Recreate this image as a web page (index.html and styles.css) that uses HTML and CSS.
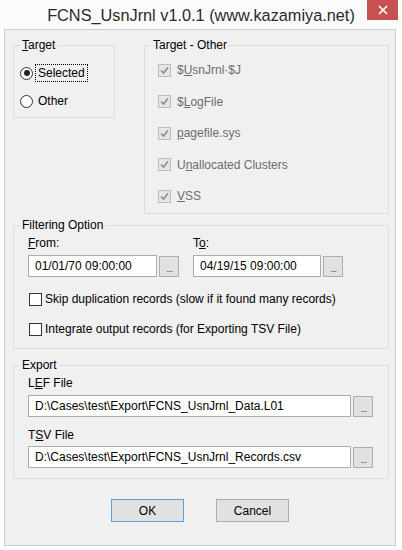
FILE: index.html
```html
<!DOCTYPE html>
<html>
<head>
<meta charset="utf-8">
<link rel="stylesheet" href="styles.css">
</head>
<body>
<div class="titlebar">
  <div></div>
  <div class="title">FCNS_UsnJrnl v1.0.1 (www.kazamiya.net)</div>
  <div class="close"><svg width="10" height="10" viewBox="0 0 10 10"><path d="M1 1 L9 9 M9 1 L1 9" stroke="#fff" stroke-width="1.7" fill="none"/></svg></div>
</div>
<div class="window">
  <div class="toprow">
    <div class="group g-target">
      <div class="legend"><u>T</u>arget</div>
      <div class="radio-row first"><span class="radio checked"></span><span class="rlabel focus">Selected</span></div>
      <div class="radio-row second"><span class="radio"></span><span class="rlabel">Other</span></div>
    </div>
    <div class="group g-other">
      <div class="legend">Target - Other</div>
      <div class="check-row disabled first"><span class="cbox"><svg width="11" height="11" viewBox="0 0 11 11"><path d="M2 5.5 L4.5 8 L9 2.5" stroke="#8a8a8a" stroke-width="1.6" fill="none"/></svg></span><span>$<u>U</u>snJrnl·$J</span></div>
      <div class="check-row disabled"><span class="cbox"><svg width="11" height="11" viewBox="0 0 11 11"><path d="M2 5.5 L4.5 8 L9 2.5" stroke="#8a8a8a" stroke-width="1.6" fill="none"/></svg></span><span>$<u>L</u>ogFile</span></div>
      <div class="check-row disabled"><span class="cbox"><svg width="11" height="11" viewBox="0 0 11 11"><path d="M2 5.5 L4.5 8 L9 2.5" stroke="#8a8a8a" stroke-width="1.6" fill="none"/></svg></span><span><u>p</u>agefile.sys</span></div>
      <div class="check-row disabled"><span class="cbox"><svg width="11" height="11" viewBox="0 0 11 11"><path d="M2 5.5 L4.5 8 L9 2.5" stroke="#8a8a8a" stroke-width="1.6" fill="none"/></svg></span><span>U<u>n</u>allocated Clusters</span></div>
      <div class="check-row disabled"><span class="cbox"><svg width="11" height="11" viewBox="0 0 11 11"><path d="M2 5.5 L4.5 8 L9 2.5" stroke="#8a8a8a" stroke-width="1.6" fill="none"/></svg></span><span><u>V</u>SS</span></div>
    </div>
  </div>

  <div class="group g-filter">
    <div class="legend">Filtering Option</div>
    <div class="date-row">
      <div class="date-col">
        <div class="flabel"><u>F</u>rom:</div>
        <div class="field"><div class="textbox tb-date">01/01/70 09:00:00</div><div class="browse">...</div></div>
      </div>
      <div class="date-col">
        <div class="flabel">T<u>o</u>:</div>
        <div class="field"><div class="textbox tb-date2">04/19/15 09:00:00</div><div class="browse">...</div></div>
      </div>
    </div>
    <div class="check-row opt first-opt"><span class="cbox enabled"></span><span>Skip duplication records (slow if it found many records)</span></div>
    <div class="check-row opt"><span class="cbox enabled"></span><span>Integrate output records (for Exporting TSV File)</span></div>
  </div>

  <div class="group g-export">
    <div class="legend">Export</div>
    <div class="flabel lef">L<u>E</u>F File</div>
    <div class="field"><div class="textbox tb-path">D:\Cases\test\Export\FCNS_UsnJrnl_Data.L01</div><div class="browse">...</div></div>
    <div class="flabel tsv">T<u>S</u>V File</div>
    <div class="field f2"><div class="textbox tb-path">D:\Cases\test\Export\FCNS_UsnJrnl_Records.csv</div><div class="browse">...</div></div>
  </div>

  <div class="buttons">
    <div class="btn default">OK</div>
    <div class="btn">Cancel</div>
  </div>
</div>
</body>
</html>
```

FILE: styles.css
```css
html, body {
  margin: 0;
  padding: 0;
}
body {
  width: 402px;
  height: 550px;
  background: #ffffff;
  font-family: "Liberation Sans", Arial, sans-serif;
  font-size: 12px;
  color: #000;
  overflow: hidden;
}
u {
  text-decoration: underline;
  text-underline-offset: 1px;
  text-decoration-thickness: 1px;
}
.titlebar {
  height: 29px;
  display: grid;
  grid-template-columns: 1fr auto 1fr;
  align-items: center;
  background: #fbfbfb;
}
.title {
  font-size: 16.3px;
  color: #2a2a2a;
  line-height: 20px;
  padding-top: 1px;
  white-space: nowrap;
}
.close {
  justify-self: end;
  align-self: start;
  margin-right: 4px;
  width: 31px;
  height: 20px;
  background: #c75050;
  display: flex;
  align-items: center;
  justify-content: center;
}
.close svg { display: block; }

.window {
  margin-left: 4px;
  width: 392px;
  height: 517px;
  box-sizing: border-box;
  border: 1px solid #cfcfcf;
  background: #f0f0f0;
  padding: 15px 6px 0 8px;
}
.toprow {
  display: flex;
  gap: 29px;
  align-items: flex-start;
}
.group {
  box-sizing: border-box;
  border: 1px solid #dcdcdc;
}
.legend {
  width: fit-content;
  margin-top: -8px;
  padding: 0 2px;
  line-height: 15px;
  background: #f0f0f0;
}
.g-target {
  width: 102px;
  height: 73px;
  padding-left: 6px;
}
.g-target .legend { margin-left: 0; }
.g-other {
  width: 245px;
  height: 169px;
  padding-left: 13px;
}
.g-other .legend { margin-left: -7px; }
.radio-row {
  display: flex;
  align-items: center;
  height: 18px;
}
.radio-row.first { margin-top: 11px; }
.radio-row.second { margin-top: 10px; }
.radio {
  width: 13px;
  height: 13px;
  box-sizing: border-box;
  border: 1px solid #333;
  border-radius: 50%;
  background: #fff;
  display: flex;
  align-items: center;
  justify-content: center;
  flex: none;
}
.radio.checked::after {
  content: "";
  width: 6px;
  height: 6px;
  border-radius: 50%;
  background: #222;
}
.rlabel {
  margin-left: 2px;
  padding: 0 2px;
  border: 1px solid transparent;
  line-height: 16px;
}
.rlabel.focus {
  border: 1px dotted #000;
}

.check-row {
  display: flex;
  align-items: center;
  height: 16px;
  margin-top: 15.5px;
}
.check-row.first { margin-top: 9px; }
.check-row.disabled { color: #6d6d6d; gap: 6px; }
.cbox {
  width: 13px;
  height: 13px;
  box-sizing: border-box;
  border: 1px solid #bcbcbc;
  background: #e6e6e6;
  display: flex;
  align-items: center;
  justify-content: center;
  flex: none;
}
.cbox svg { display: block; }
.cbox.enabled {
  border-color: #333;
  background: #fff;
}

.g-filter {
  margin-top: 11px;
  height: 124px;
  padding-left: 14px;
}
.g-filter .legend, .g-export .legend { margin-left: -8px; }
.date-row {
  display: flex;
  gap: 14px;
  margin-top: 3px;
}
.flabel {
  line-height: 15px;
}
.field {
  display: flex;
  align-items: center;
  gap: 2px;
  margin-top: 4px;
}
.textbox {
  box-sizing: border-box;
  height: 22px;
  border: 1px solid #abadb3;
  background: #fff;
  padding-left: 6px;
  line-height: 20px;
  white-space: nowrap;
  overflow: hidden;
}
.tb-date { width: 129px; }
.tb-date2 { width: 128px; }
.tb-path { width: 323px; }
.browse {
  box-sizing: border-box;
  width: 20px;
  height: 21px;
  border: 1px solid #adadad;
  background: #e1e1e1;
  display: flex;
  align-items: flex-end;
  justify-content: center;
  font-size: 9px;
  letter-spacing: -0.5px;
  line-height: 9px;
  padding-bottom: 2px;
  padding-left: 1px;
  color: #333;
  flex: none;
}
.check-row.opt {
  margin-left: 1px;
  gap: 3px;
}
.check-row.first-opt { margin-top: 14px; }
.check-row.opt + .check-row.opt { margin-top: 14px; }

.g-export {
  margin-top: 16px;
  height: 114px;
  padding-left: 14px;
}
.flabel.lef { margin-top: 3px; }
.flabel.tsv { margin-top: 11px; }
.field.f2 { margin-top: 3px; }

.buttons {
  display: flex;
  justify-content: center;
  gap: 32px;
  margin-top: 20px;
  padding-right: 2px;
}
.btn {
  box-sizing: border-box;
  width: 73px;
  height: 23px;
  border: 1px solid #adadad;
  background: #e1e1e1;
  display: flex;
  align-items: center;
  justify-content: center;
}
.btn.default {
  border-color: #5a9fe0;
}
```
